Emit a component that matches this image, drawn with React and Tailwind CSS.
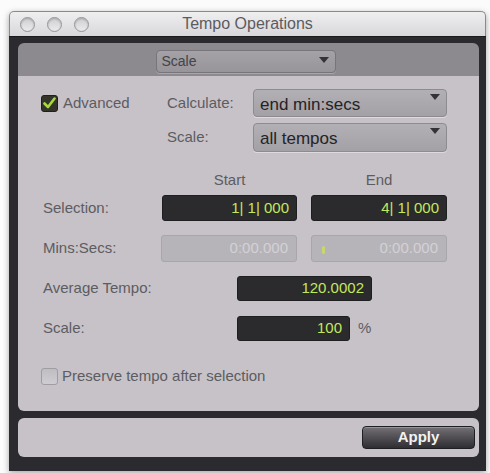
import React from "react";

const font = { fontFamily: '"Liberation Sans", Arial, sans-serif' };

function Light() {
  return (
    <div className="w-[15px] h-[15px] rounded-full border border-[#959597] bg-gradient-to-b from-[#cfcfd1] to-[#ebebed] shadow-[inset_0_1px_2px_rgba(0,0,0,0.2)]" />
  );
}

function Arrow() {
  return (
    <svg width="10" height="6" viewBox="0 0 10 6">
      <path d="M0 0 L10 0 L5 6 Z" fill="#333236" />
    </svg>
  );
}

function Dropdown({ children, h }) {
  return (
    <div className={`w-[194px] ${h} flex items-start justify-between pl-[6px] pr-[6px] rounded-[4px] border border-[#8d8a90] bg-gradient-to-b from-[#b3b0b5] to-[#a3a0a6] shadow-[0_1px_0_rgba(255,255,255,0.4)]`}>
      <span className="text-[17px] text-[#242327] leading-none mt-[6px]">{children}</span>
      <span className="mt-[4px]"><Arrow /></span>
    </div>
  );
}

function Field({ w, children, h = "h-[26px]" }) {
  return (
    <div className={`${w} ${h} flex items-center justify-end pr-[7px] rounded-[3px] bg-[#2b2a2d] border border-[#1e1d20] text-[15px] text-[#c3e85c]`}>
      {children}
    </div>
  );
}

function DimField({ children, cursor }) {
  return (
    <div className="relative w-[136px] h-[27px] flex items-center justify-end pr-[8px] rounded-[3px] bg-[#b7b4b9] border border-[#a8a5ab] text-[15px] text-[#d3d1d5]">
      {cursor && <div className="absolute left-[10px] top-[10px] w-[3px] h-[8px] bg-[#c8d86a] rounded-full" />}
      {children}
    </div>
  );
}

export default function App() {
  return (
    <div className="w-[490px] h-[473px] bg-[#fbfbfb] pt-[11px] pl-[9px]" style={font}>
      <div className="w-[477px] rounded-t-[5px] shadow-[0_2px_6px_rgba(0,0,0,0.35)]">
        {/* title bar */}
        <div className="relative h-[25px] rounded-t-[5px] border border-b-0 border-[#8a8a8c] bg-gradient-to-b from-[#efeff0] to-[#d8d7da] flex items-center">
          <div className="flex gap-[12px] pl-[10px]">
            <Light />
            <Light />
            <Light />
          </div>
          <div className="absolute inset-0 flex items-center justify-center text-[16px] text-[#5c5b60]">
            Tempo Operations
          </div>
        </div>
        {/* body */}
        <div className="bg-[#2b2a2e] pt-[6px] pl-[9px] pr-[7px] pb-[14px] border-t border-[#1a1a1c]">
          {/* strip */}
          <div className="h-[33px] rounded-t-[6px] bg-[#8c898f] flex justify-center pt-[7px] pr-[6px]">
            <div className="w-[180px] h-[23px] flex items-start justify-between pl-[5px] pr-[6px] rounded-[4px] border border-[#77747a] bg-gradient-to-b from-[#a4a1a7] to-[#97949a] shadow-[0_1px_0_rgba(255,255,255,0.25)]">
              <span className="text-[14px] text-[#444347] mt-[3px] leading-none">Scale</span>
              <span className="mt-[6px]"><Arrow /></span>
            </div>
          </div>
          {/* main panel */}
          <div className="h-[335px] rounded-b-[6px] bg-[#c6c2c8] pt-[13px] text-[15px] text-[#5d5c61]">
            {/* row A */}
            <div className="flex items-center pl-[23px] h-[28px]">
              <div className="w-[126px] flex items-center self-start mt-[3px]">
                <div className="w-[17px] h-[17px] rounded-[3px] bg-[#34352a] border border-[#1f201a] flex items-center justify-center">
                  <svg width="13" height="12" viewBox="0 0 13 12">
                    <path d="M1.5 6.5 L5 10 L11.5 1.5" stroke="#a8d83c" strokeWidth="2.6" fill="none" strokeLinecap="round" strokeLinejoin="round" />
                  </svg>
                </div>
                <span className="ml-[5px]">Advanced</span>
              </div>
              <div className="w-[86px]">Calculate:</div>
              <Dropdown h="h-[28px]">end min:secs</Dropdown>
            </div>
            {/* row B */}
            <div className="flex items-center pl-[23px] h-[29px] mt-[6px]">
              <div className="w-[126px]" />
              <div className="w-[86px]">Scale:</div>
              <Dropdown h="h-[29px]">all tempos</Dropdown>
            </div>
            {/* headers */}
            <div className="flex pl-[25px] mt-[19px] h-[18px] items-center">
              <div className="w-[119px]" />
              <div className="w-[135px] text-center">Start</div>
              <div className="w-[14px]" />
              <div className="w-[136px] text-center">End</div>
            </div>
            {/* selection */}
            <div className="flex pl-[25px] mt-[6px] items-center">
              <div className="w-[119px]">Selection:</div>
              <Field w="w-[135px]">1| 1| 000</Field>
              <div className="w-[14px]" />
              <Field w="w-[136px]">4| 1| 000</Field>
            </div>
            {/* mins secs */}
            <div className="flex pl-[25px] mt-[14px] items-center">
              <div className="w-[118px]">Mins:Secs:</div>
              <DimField>0:00.000</DimField>
              <div className="w-[14px]" />
              <DimField cursor>0:00.000</DimField>
            </div>
            {/* average tempo */}
            <div className="flex pl-[25px] mt-[14px] items-center">
              <div className="w-[194px]">Average Tempo:</div>
              <Field w="w-[135px]" h="h-[25px]">120.0002</Field>
            </div>
            {/* scale */}
            <div className="flex pl-[25px] mt-[15px] items-center">
              <div className="w-[194px]">Scale:</div>
              <Field w="w-[113px]" h="h-[25px]">100</Field>
              <span className="ml-[8px]">%</span>
            </div>
            {/* preserve */}
            <div className="flex pl-[23px] mt-[24px] items-center">
              <div className="w-[17px] h-[17px] rounded-[3px] border border-[#9f9ca2] bg-gradient-to-b from-[#c0bdc2] to-[#d0cdd2]" />
              <span className="ml-[4px]">Preserve tempo after selection</span>
            </div>
          </div>
          {/* bottom panel */}
          <div className="mt-[7px] h-[39px] rounded-[6px] bg-[#c6c2c8] flex items-center justify-end pr-[4px]">
            <div className="w-[113px] h-[23px] rounded-[4px] border border-[#1f1e21] bg-gradient-to-b from-[#747176] to-[#2f2e32] flex items-center justify-center text-[15px] font-bold text-[#f2f2f2] shadow-[inset_0_1px_0_rgba(255,255,255,0.25)]">
              Apply
            </div>
          </div>
        </div>
      </div>
    </div>
  );
}
